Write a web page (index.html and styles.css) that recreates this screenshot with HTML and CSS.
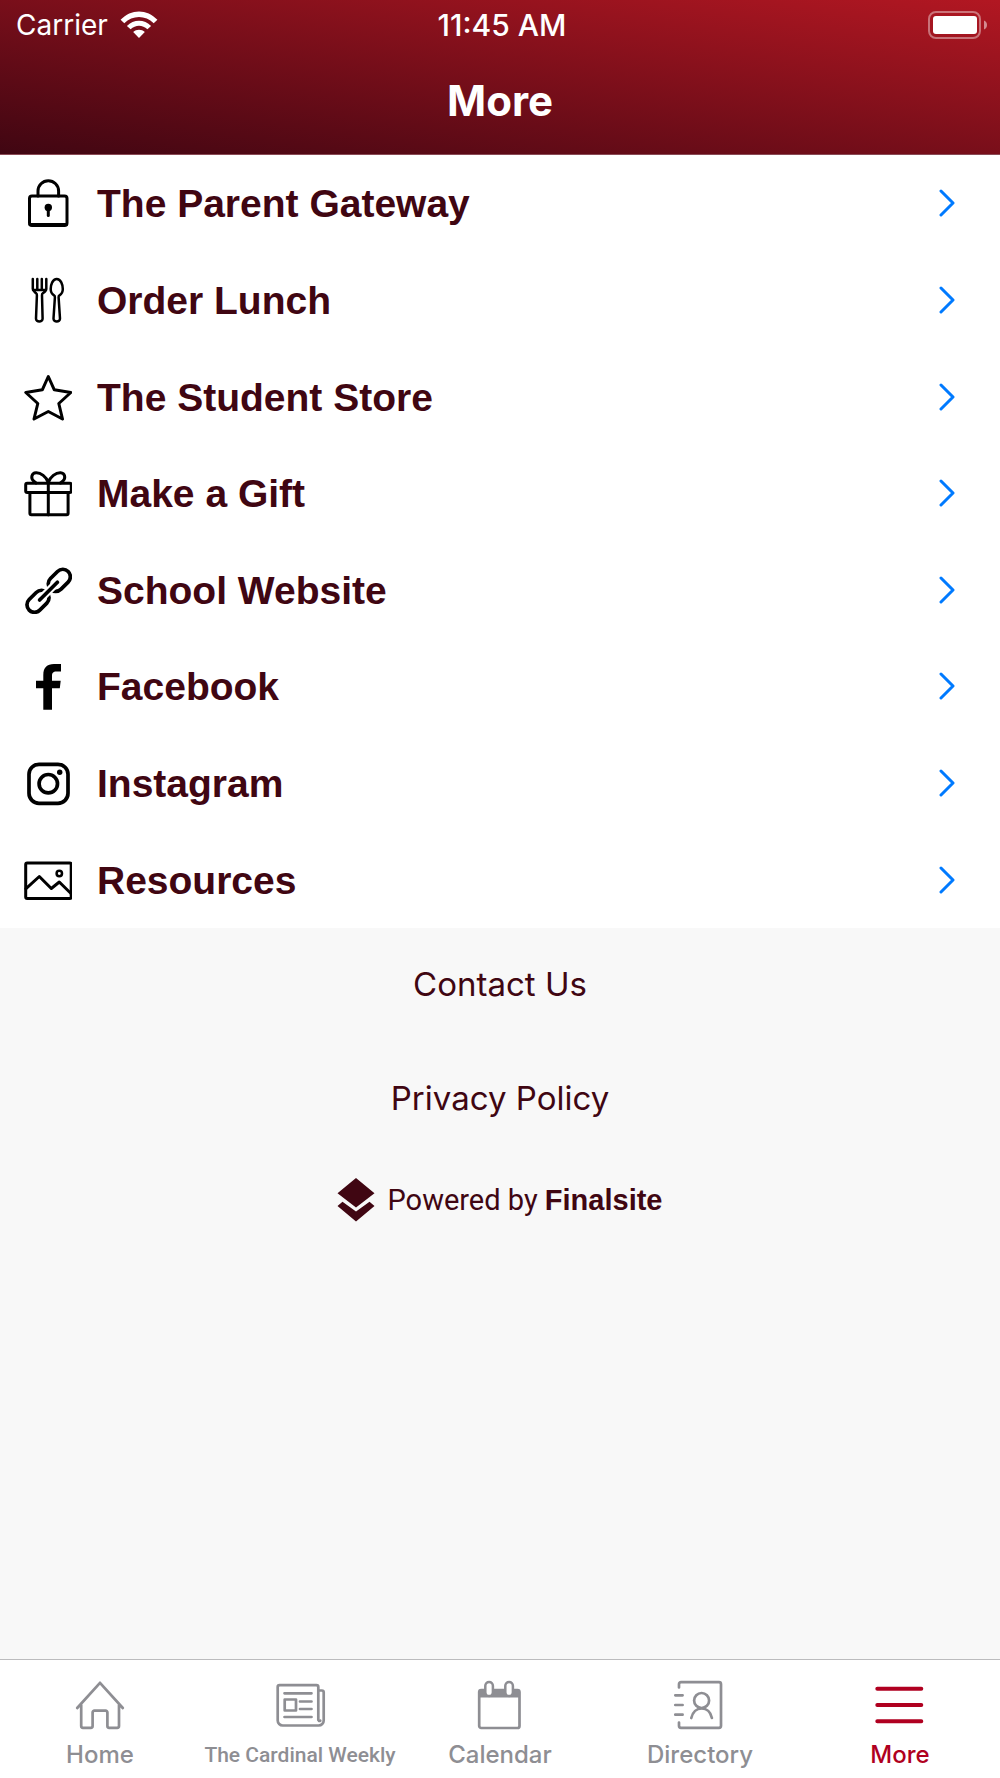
FILE: index.html
```html
<!DOCTYPE html>
<html lang="en">
<head>
<meta charset="utf-8">
<meta name="viewport" content="width=device-width, initial-scale=1">
<title>More</title>
<link rel="stylesheet" href="styles.css">
</head>
<body>
<header class="header">
  <div class="status">
    <div class="carrier">
      <span>Carrier</span>
      <svg class="wifi" width="38" height="28" viewBox="0 0 38 28" aria-hidden="true">
        <path d="M.6 8.800C11-2.400 27-2.400 37.400 8.800L33.700 12.300C25.500 3.800 12.500 3.800 4.300 12.300Z"/>
        <path d="M6.900 14.900C13.500 8 24.500 8 31.100 14.900L27.400 18.300C22.500 13.600 15.500 13.600 10.600 18.300Z"/>
        <path d="M13.200 21C16.500 17.900 21.500 17.900 24.800 21L19 27Z"/>
      </svg>
    </div>
    <time class="clock">11:45 AM</time>
    <svg class="battery" width="60" height="28" viewBox="0 0 60 28" role="img" aria-label="Battery full">
      <rect x="1" y="1" width="51" height="26" rx="7" fill="none" stroke="#fff" stroke-opacity=".4" stroke-width="2"/>
      <rect x="5" y="5" width="44" height="18" rx="3" fill="#fff"/>
      <path d="M56 9.500c4 1.500 4 7.500 0 9Z" fill="#fff" fill-opacity=".5"/>
    </svg>
  </div>
  <h1 class="title">More</h1>
</header>

<main class="main">
  <nav class="menu" aria-label="More links">
    <a class="row" href="#gateway">
      <svg class="icon" viewBox="0 0 48 48" aria-hidden="true"><rect x="5.500" y="17" width="37.500" height="29.500" rx="2.500"/><path d="M14 17v-5a10.300 10.300 0 0 1 20.600 0v5M6 45.500h36.500"/><circle class="solid" cx="24.300" cy="28.500" r="3.700"/><path d="M24.300 29v7.500"/></svg>
      <span class="label">The Parent Gateway</span>
      <svg class="chevron" viewBox="0 0 16 28" aria-hidden="true"><path d="M2 2l12 12L2 26"/></svg>
    </a>
    <a class="row" href="#lunch">
      <svg class="icon thin" viewBox="0 0 48 48" aria-hidden="true"><path d="M8.800 3v10c0 2 2 3.200 3.200 4.200.9.500 1 1.300.9 2.300L12 42.500c-.2 4 6.800 4 6.600 0L18 19.500c-.1-1 0-1.800.9-2.300 1.600-1 3.400-2.200 3.400-4.200V3M13.300 3v11M17.800 3v11M9 14h13"/><path d="M32.700 3c-4 0-6 5.500-6 10 0 3.400 1.500 5.300 3.300 6.300.8.500 1 1 .9 2l-1.400 21.200c-.2 4 6.700 4 6.500 0L34.600 21.300c-.1-1 .1-1.500.9-2 1.800-1 3.300-2.900 3.300-6.300 0-4.500-2-10-6.100-10Z"/></svg>
      <span class="label">Order Lunch</span>
      <svg class="chevron" viewBox="0 0 16 28" aria-hidden="true"><path d="M2 2l12 12L2 26"/></svg>
    </a>
    <a class="row" href="#store">
      <svg class="icon" viewBox="0 0 48 48" aria-hidden="true"><path d="M24.300 3.500 30.300 16.800 46.800 19.500 34.800 30.500 38.500 46 24.300 38.500 10 46 13.800 30.500 1.800 19.500 18.300 16.800Z"/></svg>
      <span class="label">The Student Store</span>
      <svg class="chevron" viewBox="0 0 16 28" aria-hidden="true"><path d="M2 2l12 12L2 26"/></svg>
    </a>
    <a class="row" href="#gift">
      <svg class="icon" viewBox="0 0 48 48" aria-hidden="true"><rect x="1.700" y="14.300" width="45.600" height="9.200" rx="1.500"/><path d="M5.900 24v20.300a1.500 1.500 0 0 0 1.500 1.500h35.200a1.500 1.500 0 0 0 1.500-1.500V24M24.300 14v32"/><path d="M24.300 13.500C22.500 8 16.500 3.400 12 3.700 7.500 4 6.500 9 9.500 12l2.500 2M24.300 13.500C26 8 32 3.400 36.600 3.700 41 4 42 9 39 12l-2.500 2"/></svg>
      <span class="label">Make a Gift</span>
      <svg class="chevron" viewBox="0 0 16 28" aria-hidden="true"><path d="M2 2l12 12L2 26"/></svg>
    </a>
    <a class="row" href="#website">
      <svg class="icon link" viewBox="0 0 48 48" aria-hidden="true"><rect x="22.800" y="6.800" width="25" height="15" rx="7.500" transform="rotate(-45 35.300 14.300)"/><rect x="1.500" y="27.800" width="25" height="15" rx="7.500" transform="rotate(-45 14 35.300)"/><path class="gap" d="M18.500 31 30.500 19"/><path d="M15.600 34 33.400 16.200"/></svg>
      <span class="label">School Website</span>
      <svg class="chevron" viewBox="0 0 16 28" aria-hidden="true"><path d="M2 2l12 12L2 26"/></svg>
    </a>
    <a class="row" href="#facebook">
      <svg class="icon" viewBox="0 0 48 48" aria-hidden="true"><path class="solid" d="M19.300 47.700V26.300H12v-7.600h7.300V13C19.300 5.500 23 2 30 2h7v7.500h-4.500C29 9.500 28 11 28 14v4.700h8.700l-.9 7.600H28v21.400Z"/></svg>
      <span class="label">Facebook</span>
      <svg class="chevron" viewBox="0 0 16 28" aria-hidden="true"><path d="M2 2l12 12L2 26"/></svg>
    </a>
    <a class="row" href="#instagram">
      <svg class="icon link" viewBox="0 0 48 48" aria-hidden="true"><rect x="5" y="5.300" width="39" height="39" rx="10"/><circle cx="24.300" cy="24.700" r="9.200"/><circle class="solid" cx="35.700" cy="13.300" r="2.700"/></svg>
      <span class="label">Instagram</span>
      <svg class="chevron" viewBox="0 0 16 28" aria-hidden="true"><path d="M2 2l12 12L2 26"/></svg>
    </a>
    <a class="row" href="#resources">
      <svg class="icon" viewBox="0 0 48 48" aria-hidden="true"><rect x="1.700" y="7" width="45.500" height="35.500" rx="1.500"/><path d="M2 32.700 15.300 20.500 27.300 32.500 35.300 26 47 37.500"/><circle class="fine" cx="35.300" cy="17.500" r="2.700"/></svg>
      <span class="label">Resources</span>
      <svg class="chevron" viewBox="0 0 16 28" aria-hidden="true"><path d="M2 2l12 12L2 26"/></svg>
    </a>
  </nav>

  <div class="info">
    <a class="info-link" href="#contact">Contact Us</a>
    <a class="info-link" href="#privacy">Privacy Policy</a>
    <a class="powered" href="#finalsite">
      <svg width="38" height="44" viewBox="0 0 38 44" aria-hidden="true"><path d="M19 0 37.500 15.300 19 29.500.5 15.300ZM5.500 23.700 19 33.500 32.500 23.700 37.500 28 19 43.500.5 28Z"/></svg>
      <span class="powered-text">Powered by <strong>Finalsite</strong></span>
    </a>
  </div>
</main>

<nav class="tabs" aria-label="Main">
  <a class="tab" href="#home">
    <svg class="tab-icon" viewBox="0 0 48 48" aria-hidden="true"><path d="M1.200 27 24 1.800 46.800 27M5.200 24v21a1.800 1.800 0 0 0 1.800 1.800h7.800a1.800 1.800 0 0 0 1.800-1.800V31.500a1.800 1.800 0 0 1 1.800-1.800h11.200a1.800 1.800 0 0 1 1.800 1.800V45a1.800 1.800 0 0 0 1.800 1.800h8a1.800 1.800 0 0 0 1.800-1.800V24"/></svg>
    <span>Home</span>
  </a>
  <a class="tab long" href="#weekly">
    <svg class="tab-icon" viewBox="0 0 48 48" aria-hidden="true"><path d="M42.300 39V6a1.800 1.800 0 0 0-1.800-1.800H3.500A1.800 1.800 0 0 0 1.700 6v33.500a5 5 0 0 0 5 5h36a5 5 0 0 0 5-5V11.300a1.800 1.800 0 0 0-1.800-1.800h-3M42.300 38q0 2.500 2 1.700M8.500 12.300h27M24 20.500h11.500M24 28h11.500M8.500 36h27"/><rect x="8.700" y="18.500" width="11.300" height="11"/></svg>
    <span>The Cardinal Weekly</span>
  </a>
  <a class="tab" href="#calendar">
    <svg class="tab-icon" viewBox="0 0 48 48" aria-hidden="true"><rect x="3.200" y="9" width="40.300" height="38" rx="2"/><path class="band" d="M3 9h41v7.500H3Z"/><rect class="ring" x="9.300" y="1" width="7.600" height="14" rx="3.800"/><rect class="ring" x="29.300" y="1" width="7.600" height="14" rx="3.800"/></svg>
    <span>Calendar</span>
  </a>
  <a class="tab" href="#directory">
    <svg class="tab-icon" viewBox="0 0 48 48" aria-hidden="true"><path d="M3 6.500V3.200A2 2 0 0 1 5 1.200h38a2 2 0 0 1 2 2v41.600a2 2 0 0 1-2 2H5a2 2 0 0 1-2-2v-3.300M-.7 14.300h7.300M-.7 24h7.300M-.7 33.700h7.300M15.300 37c1.500-6 5-9.500 10.300-9.500s9 3.500 10.300 9.500"/><circle cx="25.600" cy="19.500" r="7.500"/></svg>
    <span>Directory</span>
  </a>
  <a class="tab active" href="#more" aria-current="page">
    <svg class="tab-icon" viewBox="0 0 48 48" aria-hidden="true"><path d="M1.300 7.700h44M1.300 24h44M1.300 40.300h44"/></svg>
    <span>More</span>
  </a>
</nav>
</body>
</html>
```

FILE: styles.css
```css
* {
  box-sizing: border-box;
}

body {
  margin: 0;
  min-height: 100vh;
  display: flex;
  flex-direction: column;
  background: #f8f8f8;
  color: #400612;
  font-family: Inter, "Liberation Sans", sans-serif;
}

a {
  color: inherit;
  text-decoration: none;
}

svg {
  flex: none;
}

.header {
  padding-bottom: 25px;
  background: linear-gradient(to top right, #400612, #b21722);
  border-bottom: 1px solid #8a4a55;
  color: #fff;
}

.status {
  display: grid;
  grid-template-columns: 1fr auto 1fr;
  align-items: center;
  padding: 8px 12px 8px 16px;
  font-size: 28px;
  line-height: 34px;
}

.carrier {
  display: flex;
  align-items: center;
  gap: 12px;
}

.wifi {
  fill: #fff;
}

.clock {
  font-size: 30px;
  font-weight: 500;
}

.battery {
  justify-self: end;
}

.title {
  margin: 0;
  padding-top: 23px;
  font-size: 42px;
  font-weight: 700;
  line-height: 56px;
  text-align: center;
}

.main {
  flex: 1;
}

.menu {
  display: grid;
  grid-auto-rows: 1fr;
  min-height: 773px;
  background: #fff;
}

.row {
  display: flex;
  align-items: center;
  gap: 25px;
  padding: 0 45px 0 24px;
}

.label {
  flex: 1;
  padding-top: 2px;
  font: 700 39px/48px "Liberation Sans", Arial, sans-serif;
}

.icon {
  width: 48px;
  height: 48px;
  fill: none;
  stroke: #000;
  stroke-width: 3;
  stroke-linecap: round;
  stroke-linejoin: round;
}

.icon .solid {
  fill: #000;
  stroke: none;
}

.icon .fine,
.icon.thin {
  stroke-width: 2.5;
}

.icon.link {
  stroke-width: 3.7;
}

.icon.link .gap {
  stroke: #fff;
  stroke-width: 8;
  stroke-linecap: butt;
}

.chevron {
  width: 16px;
  height: 28px;
  fill: none;
  stroke: #007aff;
  stroke-width: 3;
  stroke-linecap: round;
  stroke-linejoin: round;
}

.info {
  display: flex;
  flex-direction: column;
  align-items: center;
  padding: 31px 0;
}

.info-link {
  margin-bottom: 64px;
  font-size: 33px;
  line-height: 50px;
}

.powered {
  display: flex;
  align-items: center;
  gap: 12px;
  margin-top: -12px;
  font: 400 29px/50px Roboto, sans-serif;
}

.powered svg {
  fill: #400612;
}

.powered strong {
  font: 700 29px/50px "Liberation Sans", Arial, sans-serif;
}

.tabs {
  display: grid;
  grid-template-columns: repeat(5, minmax(0, 1fr));
  background: #fff;
  border-top: 1px solid #bcbcbe;
  color: #8e8e93;
}

.tab {
  display: flex;
  flex-direction: column;
  align-items: center;
  gap: 11px;
  padding: 21px 0 8px;
  font-size: 24px;
  font-weight: 500;
  line-height: 30px;
  white-space: nowrap;
}

.tab.long span {
  font: 500 21px/30px Roboto, sans-serif;
}

.tab.active {
  color: #b00020;
}

.tab-icon {
  width: 48px;
  height: 48px;
  overflow: visible;
  fill: none;
  stroke: currentColor;
  stroke-width: 2.7;
  stroke-linecap: round;
  stroke-linejoin: round;
}

.active .tab-icon {
  stroke-width: 4;
}

.tab-icon .band {
  fill: currentColor;
  stroke: none;
}

.tab-icon .ring {
  fill: #fff;
  stroke-width: 2.5;
}
```
